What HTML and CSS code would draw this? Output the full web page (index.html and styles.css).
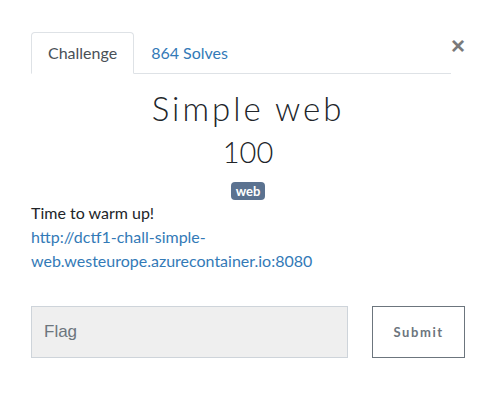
FILE: index.html
```html
<!DOCTYPE html>
<html>
<head>
<meta charset="utf-8">
<link rel="stylesheet" href="styles.css">
</head>
<body>
<div class="modal">
  <div class="header">
    <nav class="tabs">
      <span class="tab active">Challenge</span>
      <a class="tab link">864 Solves</a>
    </nav>
    <span class="close">&times;</span>
  </div>
  <h2 class="title">Simple web</h2>
  <h3 class="value">100</h3>
  <div class="tags"><span class="badge">web</span></div>
  <div class="desc">
    <p>Time to warm up!<br><a class="url">http://dctf1-chall-simple-web.westeurope.azurecontainer.io:8080</a></p>
  </div>
  <div class="form">
    <input class="flag" placeholder="Flag">
    <button class="submit">Submit</button>
  </div>
</div>
</body>
</html>
```
FILE: styles.css
```css
html, body { margin: 0; padding: 0; background: #fff; }
body { font-family: Lato, "Open Sans", sans-serif; color: #212529; }
.modal { padding: 32px 30px 0 31px; width: 434px; }
.header { display: flex; align-items: flex-start; }
.tabs { display: flex; width: 420px; border-bottom: 1px solid #dee2e6; }
.tab { font-size: 16px; line-height: 20px; padding: 10px 16px 10px 16px; border: 1px solid transparent; border-top-left-radius: 4px; border-top-right-radius: 4px; margin-bottom: -1px; }
.tab.active { color: #495057; border-color: #dee2e6 #dee2e6 #fff; background: #fff; }
.tab.link { color: #337ab7; }
.close { margin-left: auto; margin-top: 4px; font-size: 24px; font-weight: 700; line-height: 20px; color: #7a7a7a; font-family: "Liberation Sans", Arial, sans-serif; }
.title { margin: 14px 0 0; text-align: center; font-weight: 300; font-size: 33px; letter-spacing: 3px; line-height: 40px; }
.value { margin: 4px 0 0; text-align: center; font-weight: 300; font-size: 29px; line-height: 40px; }
.tags { text-align: center; margin-top: 8px; height: 20px; }
.badge { display: inline-block; background: #5b7290; color: #fff; font-weight: 700; font-size: 13px; line-height: 13px; padding: 3px 5px 2px; border-radius: 4px; }
.desc p { margin: 1px 0 0; font-size: 16px; line-height: 24px; }
.url { color: #337ab7; }
.form { display: flex; margin-top: 33px; }
.flag { box-sizing: border-box; width: 318px; height: 52px; background: #efefef; border: 1px solid #ced4da; padding: 0 12px; font-family: "Liberation Sans", Arial, sans-serif; font-size: 17px; color: #666; }
.flag::placeholder { color: #6c757d; }
.submit { box-sizing: border-box; margin-left: 24px; width: 93px; height: 52px; background: #fff; border: 1px solid #6c757d; font-family: Lato, sans-serif; font-weight: 700; font-size: 13px; letter-spacing: 1.6px; color: #6c757d; }
```
